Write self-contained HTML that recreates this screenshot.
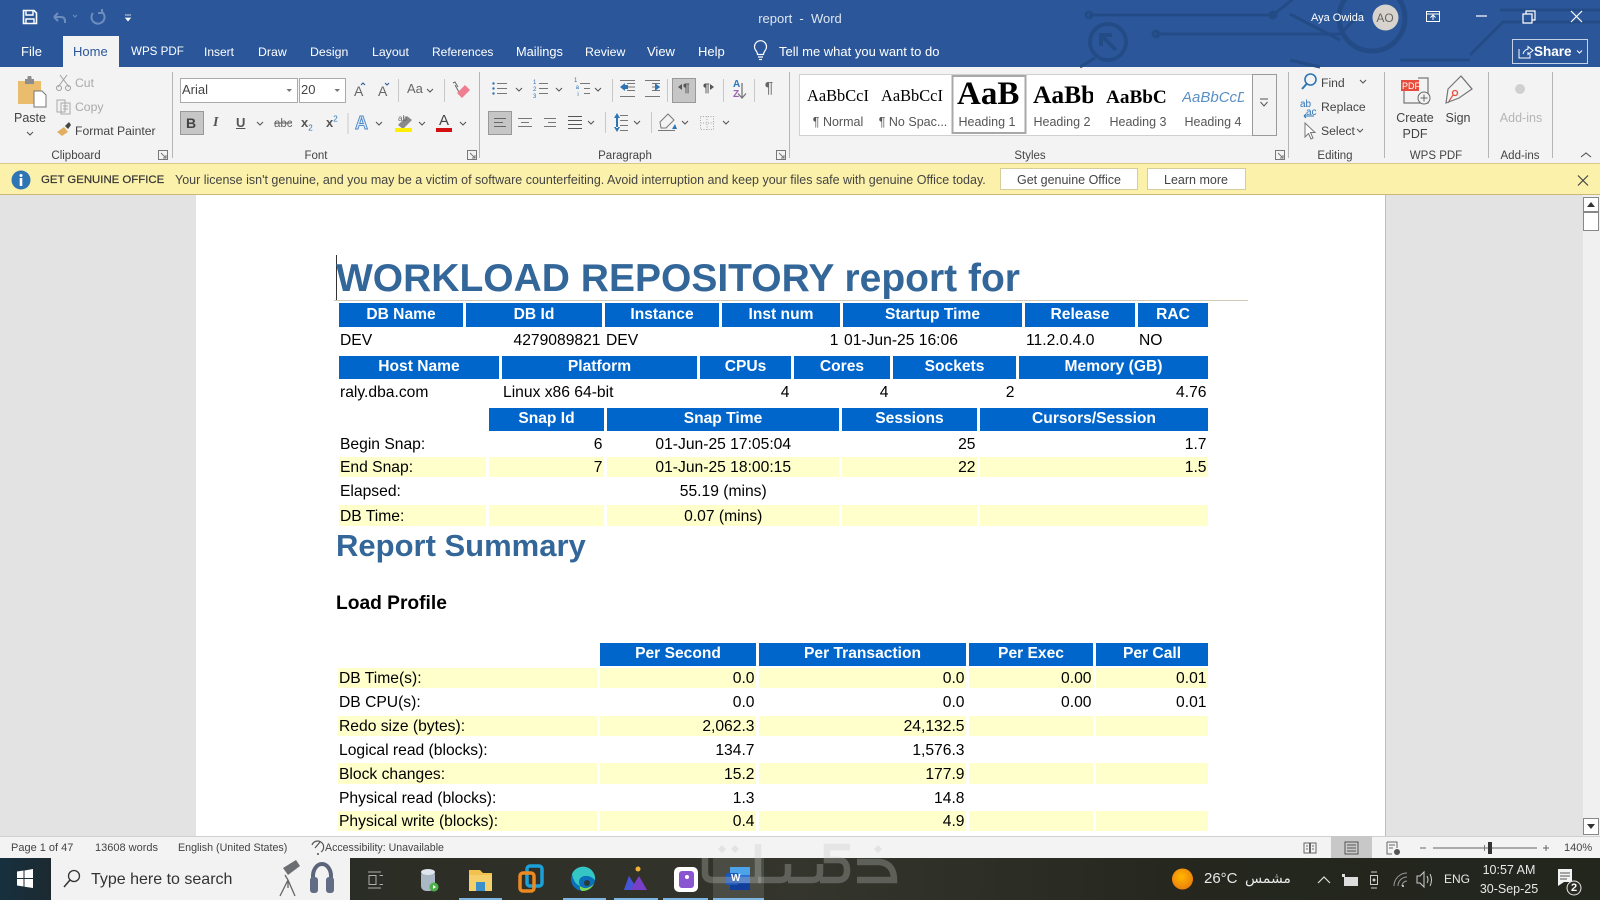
<!DOCTYPE html>
<html lang="en">
<head>
<meta charset="utf-8">
<title>report - Word</title>
<style>
html,body{margin:0;padding:0;width:1600px;height:900px;overflow:hidden;background:#fff;font-family:"Liberation Sans",Arial,sans-serif}
#app{position:relative;width:1600px;height:900px;overflow:hidden}
.b{position:absolute}
.t{position:absolute;white-space:nowrap;line-height:16px;font-size:12.2px;color:#444}
.m{transform:translateX(-50%)}
.w{color:#fff}
.g{color:#a9a9a9}
.gl{font-size:11.5px;color:#444}
.tab{font-size:12.3px;color:#fff;top:44px}
.sty{font-size:12.5px;color:#555;top:114px}
.st{font-size:10.7px;color:#444;top:840px}
table{position:absolute;table-layout:fixed;border-collapse:separate;border-spacing:3px 2px;font-size:15.65px;color:#000;line-height:16px}
td{padding:2px 1.5px 0 2px;overflow:hidden;white-space:nowrap}
th{padding:0 2px 2px;overflow:hidden;white-space:nowrap;background:#0066cc;color:#fff;font-size:15.6px;font-weight:bold;text-align:center}
.t1 th{padding-bottom:0}
td{text-align:right}
td.l{text-align:left;padding-left:1px}
td.c{text-align:center}
tr.y td{background:#ffffcc}
</style>
</head>
<body>
<div id="app">
<!-- title bar and tabs -->
<div class="b" style="left:0;top:0;width:1600px;height:67px;background:#2b579a"></div>
<!-- ribbon -->
<div class="b" style="left:0;top:67px;width:1600px;height:96px;background:#f3f3f3"></div>
<div class="b" style="left:63px;top:36px;width:56px;height:32px;background:#f3f3f3"></div>
<!-- notification -->
<div class="b" style="left:0;top:163px;width:1600px;height:30px;background:#fbf1ab;border-top:1px solid #d9c98a;border-bottom:1px solid #c9b877"></div>
<!-- doc area -->
<div class="b" style="left:0;top:195px;width:1583px;height:641px;background:#e3e3e3"></div>
<div class="b" style="left:196px;top:195px;width:1189px;height:641px;background:#fff;border-right:1px solid #bdbdbd"></div>
<div class="b" style="left:1583px;top:195px;width:17px;height:641px;background:#f0f0f0"></div>
<!-- status bar -->
<div class="b" style="left:0;top:836px;width:1600px;height:22px;background:#f3f3f3;border-top:1px solid #d0d0d0;box-sizing:border-box"></div>
<div class="b" style="left:1331px;top:836px;width:41px;height:22px;background:#c8c8c8"></div>
<!-- taskbar -->
<div class="b" style="left:0;top:858px;width:1600px;height:42px;background:linear-gradient(90deg,#17303f 0,#1c2a30 50px,#2c2d25 400px,#34352c 800px,#25271f 1200px,#22261d 1600px)"></div>
<div class="b" style="left:51px;top:858px;width:299px;height:42px;background:#f2f2f2"></div>
<div class="b" style="left:713px;top:858px;width:51px;height:42px;background:#4b4d44"></div>

<svg class="b" style="left:0;top:0" width="1600" height="900" viewBox="0 0 1600 900" fill="none">
<!-- circuit pattern -->
<g stroke="#234b86" stroke-width="3">
<path d="M1089 15H1273L1298 -5M1156 34H1340L1362 12"/>
<circle cx="1089" cy="15" r="3"/><circle cx="1273" cy="15" r="3"/><circle cx="1156" cy="34" r="3"/>
<circle cx="1108" cy="42" r="18" stroke-width="4"/>
<path d="M1101 46V35H1112M1101 35L1116 50" stroke-width="4"/>
<circle cx="1372" cy="18" r="33" stroke-width="5"/>
<path d="M1470 55L1503 22H1600M1080 67L1095 58M1290 60L1320 67M1400 60H1470M1500 10H1600M1290 14L1340 40"/>
</g>
<!-- QAT -->
<path d="M23.5 10.5H34L36.5 13V23.5H23.5Z" stroke="#fff" stroke-width="1.6"/>
<path d="M26 11V15H33V11M26 23.5V19H34V23.5" stroke="#fff" stroke-width="1.4"/>
<path d="M54 17H61Q65 17 65 21V23M54 17L58 13M54 17L58 21" stroke="#6d8ebd" stroke-width="2"/>
<path d="M73 15l2 2 2-2" stroke="#6d8ebd"/>
<path d="M93 13A6.5 6.5 0 1 0 102 12M102 9V13H98" stroke="#6d8ebd" stroke-width="2"/>
<path d="M125 15H131M125.5 18H130.5L128 21Z" stroke="#fff" fill="#fff" stroke-width=".7"/>
<!-- titlebar controls -->
<path d="M1426.5 11.5H1439.5V21.5H1426.5ZM1426.5 14H1439.5M1433 20V15.5M1430.5 17.5L1433 15L1435.5 17.5" stroke="#fff"/>
<path d="M1476 16H1487" stroke="#fff" stroke-width="1.2"/>
<path d="M1523 14H1532V23H1523ZM1526 14V11H1535V20H1532" stroke="#fff" stroke-width="1.2"/>
<path d="M1571 11L1582 22M1582 11L1571 22" stroke="#fff" stroke-width="1.2"/>
<circle cx="1385.5" cy="17.5" r="13" fill="#d8d3cd"/>
<rect x="1512.5" y="39.5" width="75" height="24" stroke="#c6d3e6"/>
<path d="M1519 49V58H1530V54M1523 54Q1524 50 1528 49V46.500L1533 50.500L1528 54.500V52" stroke="#fff"/>
<path d="M1577 50.500l2.500 2.500 2.500-2.500" stroke="#fff"/>
<path d="M755.500 50a6 6 0 1 1 10 0c-1.200 1.600-2 2.500-2 4.500h-6c0-2-.8-3-2-4.500ZM758 57h5M759 59.500h3" stroke="#fff" stroke-width="1.200"/>
<!-- Clipboard -->
<path d="M18 81H41V104H18Z" fill="#e9bd6d"/>
<path d="M25 79H34V84H25Z" fill="#8d8d8d"/><rect x="27.500" y="76" width="4" height="4" rx="1" fill="#8d8d8d"/>
<path d="M34 91H42L46 95V107H34Z" fill="#fff" stroke="#777"/>
<path d="M60 75L69 87M67 75L58 87" stroke="#9d9d9d"/><circle cx="59" cy="88" r="2.500" stroke="#9d9d9d"/><circle cx="68" cy="88" r="2.500" stroke="#9d9d9d"/>
<path d="M57 100H65V112H57ZM61 103H70V114H61ZM63 106H68M63 109H68" stroke="#aaa"/>
<path d="M57 132L64 127L68 132L62 136Z" fill="#e0b060"/><path d="M65 126L69 122L71 125L68 129Z" fill="#444"/>
<!-- font boxes -->
<rect x="180.500" y="78.500" width="117" height="24" fill="#fff" stroke="#aaa"/>
<rect x="299.500" y="78.500" width="46" height="24" fill="#fff" stroke="#aaa"/>
<path d="M286.500 89H292L289.250 92ZM334.500 89H340L337.250 92Z" fill="#777"/>
<text x="354" y="96" font-family="Liberation Sans" font-size="14" fill="#666">A</text>
<text x="378" y="96" font-family="Liberation Sans" font-size="14" fill="#666">A</text>
<path d="M361 85l2-2 2 2M385 83l2 2 2-2" stroke="#2b579a"/>
<path d="M398.500 79V102M444.500 79V102M348 113V134M612.500 79V102M667.500 79V102M723.500 79V102M754.500 79V102M605.500 112V133M651.500 112V133" stroke="#c8c8c8"/>
<path d="M172.500 72V158M479.500 72V158M789.500 72V158M1288.500 72V158M1384.500 72V158M1488.500 72V158M1552.500 72V158" stroke="#b5b5b5"/>
<path d="M455 85L460 94M453 83l2-1 3 5" stroke="#666"/>
<path d="M457 93L465 85L470 90L462 98Z" fill="#ef7f90"/>
<rect x="180.500" y="111.500" width="23" height="23" fill="#c6c6c6" stroke="#999"/>
<rect x="488.500" y="111.500" width="23" height="23" fill="#c6c6c6" stroke="#999"/>
<rect x="672.500" y="78.500" width="23" height="24" fill="#c6c6c6" stroke="#999"/>
<path d="M274 123H292" stroke="#555"/>
<text x="355" y="129" font-family="Liberation Sans" font-size="18" font-weight="bold" fill="#dbe9f7" stroke="#4a86c8" stroke-width=".9">A</text>
<path d="M398 125L407 116L412 120L403 129Z" fill="#8a8a8a"/><rect x="395" y="128" width="17" height="4" fill="#ffef00"/>
<rect x="436" y="128" width="16" height="4" fill="#d40f14"/>
<!-- paragraph icons -->
<g stroke="#777">
<path d="M497 83.500H507M497 88.500H507M497 93.500H507"/>
<path d="M539 83.500H548M539 88.500H548M539 93.500H548"/>
<path d="M580 83.500H590M584 88.500H590M584 93.500H590"/>
<path d="M627 83.500H635M627 87H635M627 90.500H635M620 96.500H635M620 80.500H635"/>
<path d="M652 83.500H660M652 87H660M652 90.500H660M645 96.500H660M645 80.500H660"/>
<path d="M494 118.500H506M494 122.500H503M494 126.500H506" stroke="#666"/>
<path d="M518 118.500H532M521 122.500H529M518 126.500H532"/>
<path d="M544 118.500H556M548 122.500H556M544 126.500H556"/>
<path d="M568 116.500H582M568 120.500H582M568 124.500H582M568 128.500H582" stroke="#555"/>
<path d="M620 115.500H628M620 120.500H628M620 125.500H628M620 130.500H628"/>
<path d="M658 130.500H675"/>
<path d="M700.500 116.500H713.500V129.500H700.500Z M707 116.500V129.500M700.500 123H713.500" stroke="#aaa" stroke-dasharray="1 1.500"/>
<path d="M742 83V97M738 93.500L742 98L746 93.500" stroke="#777" stroke-width="1.300"/>
<path d="M660 122L668 114L674 120L666 128H661Z"/>
</g>
<g fill="#2e75b6">
<circle cx="493.500" cy="83.500" r="1.200"/><circle cx="493.500" cy="88.500" r="1.200"/><circle cx="493.500" cy="93.500" r="1.200"/>
<path d="M620 87L625 83V91ZM660 87L655 83V91ZM647 85H652M647 89H652"/>
<path d="M625 85H628V89H625ZM614 118L617 113L620 118ZM614 127L617 132L620 127ZM616 117H618V128H616Z"/>
<path d="M672 129L675 124L677 129Z"/>
<path d="M678 87L682 84V90ZM714 87L710 84V90Z" fill="#555"/>
</g>
<!-- styles -->
<rect x="799.500" y="74.500" width="477" height="61" fill="#fff" stroke="#d0d0d0"/>
<rect x="952.500" y="76" width="73" height="57" fill="#fff" stroke="#a8a8a8" stroke-width="2"/>
<rect x="1252.500" y="74.500" width="24" height="61" fill="#f3f3f3" stroke="#9a9a9a"/>
<path d="M1260 99H1268M1260.500 102L1264 106L1267.500 102" stroke="#555"/>
<!-- editing -->
<circle cx="1310.500" cy="79.500" r="5.500" stroke="#2e75b6" stroke-width="1.600"/><path d="M1306.500 84L1302 89" stroke="#2e75b6" stroke-width="2"/>
<path d="M1304 116H1314M1304 116L1306 114M1304 116L1306 118" stroke="#2e75b6"/>
<path d="M1305 123V137L1308.500 133.500L1311 139L1313 138L1310.500 132.500H1315Z" fill="#fff" stroke="#777"/>
<!-- pdf/sign -->
<path d="M1405 83V102H1429V77H1419" stroke="#777" stroke-width="1.200" transform="translate(-1 1)"/>
<rect x="1401" y="80" width="18" height="11" fill="#e84c3d"/>
<circle cx="1424" cy="98" r="6" fill="#f3f3f3" stroke="#666"/><path d="M1424 94.500V101.500M1420.500 98H1427.500" stroke="#666"/>
<path d="M1446 103L1448 89L1461 76L1472 89L1459 98Z" stroke="#777" stroke-width="1.200"/>
<path d="M1461 76L1472 89M1448 103L1453 95" stroke="#777"/><circle cx="1455" cy="93" r="2.500" stroke="#e74c3c" stroke-width="1.300"/><path d="M1449 101L1453 95" stroke="#e74c3c"/>
<circle cx="1520" cy="89" r="5" fill="#d0d0d0"/>
<!-- launchers, chevrons -->
<path d="M158.500 150.500H167.500V159.500H158.500ZM467.500 150.500H476.500V159.500H467.500ZM776.500 150.500H785.500V159.500H776.500ZM1275.500 150.500H1284.500V159.500H1275.500ZM161 153L166 158M166 155V158H163M470 153L475 158M475 155V158H472M779 153L784 158M784 155V158H781M1278 153L1283 158M1283 155V158H1280" stroke="#777"/>
<path d="M27 132l3 3 3-3M427 89l3 3 3-3M516 88l3 3 3-3M556 88l3 3 3-3M595 88l3 3 3-3M257 122l3 3 3-3M376 122l3 3 3-3M419 122l3 3 3-3M460 122l3 3 3-3M588 121l3 3 3-3M634 121l3 3 3-3M682 121l3 3 3-3M723 121l3 3 3-3M1360 80l3 3 3-3M1357 129l3 3 3-3" stroke="#555" stroke-width="1.100"/>
<path d="M1581 157l5-4 5 4" stroke="#555" stroke-width="1.100"/>
<!-- notification -->
<circle cx="21" cy="180" r="9.500" fill="#2e75b6"/>
<circle cx="21" cy="175.500" r="1.500" fill="#fff"/><rect x="19.700" y="178" width="2.600" height="8" fill="#fff"/>
<rect x="1000.500" y="168.500" width="137" height="21" fill="#fff" stroke="#d6cd9d"/>
<rect x="1147.500" y="168.500" width="98" height="21" fill="#fff" stroke="#d6cd9d"/>
<path d="M1578 175.500L1588 185.500M1588 175.500L1578 185.500" stroke="#444" stroke-width="1.200"/>
<!-- scrollbar -->
<rect x="1583.500" y="197.500" width="15" height="14" fill="#fff" stroke="#888"/>
<path d="M1587 207L1591 202L1595 207Z" fill="#333"/>
<rect x="1583.500" y="212.500" width="15" height="18" fill="#fff" stroke="#888"/>
<rect x="1583.500" y="818.500" width="15" height="16" fill="#fff" stroke="#888"/>
<path d="M1587 824L1591 829L1595 824Z" fill="#333"/>
<!-- cursor and heading rule -->
<path d="M336.500 255V300" stroke="#333"/>
<path d="M334 300.500H1248" stroke="#cfc9b8"/>
<!-- status icons -->
<path d="M312 845A6 6 0 1 1 321 852M320 842L315 848" stroke="#555" stroke-width="1.200"/><circle cx="318" cy="854" r="1" fill="#555"/>
<path d="M1304 843H1309.500V853H1304ZM1310.500 843H1316V853H1310.500ZM1306 846H1308M1306 849H1308M1312 846H1314M1312 849H1314" stroke="#666"/>
<path d="M1345 842H1358V854H1345ZM1347 845H1356M1347 848H1356M1347 851H1356" stroke="#555"/>
<path d="M1387 842H1397V848M1387 842V854H1392M1389 845H1395M1389 848H1393" stroke="#666"/><circle cx="1397" cy="852" r="3" fill="#555"/>
<path d="M1420 848H1426M1433 848H1537" stroke="#666"/><path d="M1543 848H1549M1546 845V851" stroke="#666"/>
<rect x="1488" y="842" width="4" height="12" fill="#333"/><path d="M1484.500 845V851" stroke="#777"/>
<!-- taskbar icons -->
<path d="M17 871.500L23.500 870.500V878H17ZM24.500 870.500L33 869V878H24.500ZM17 879H23.500V886.500L17 885.500ZM24.500 879H33V888L24.500 886.700Z" fill="#fff"/>
<circle cx="74" cy="876" r="5.500" stroke="#333" stroke-width="1.300"/><path d="M70 880L64 887" stroke="#333" stroke-width="1.500"/>
<!-- mic -->
<path d="M283 868L296 860L300 866L288 875Z" fill="#6d6e72"/><path d="M285 875L288 880V888M288 880L280 896M288 880L295 896" stroke="#666" stroke-width="1.300"/>
<!-- headphones -->
<path d="M313 884V876A9 12 0 0 1 331 876V884" stroke="#5b6478" stroke-width="4"/>
<rect x="310" y="877" width="8" height="16" rx="3" fill="#626c84"/><rect x="326" y="877" width="8" height="16" rx="3" fill="#626c84"/>
<!-- task view -->
<path d="M368 872H381M368 888H381M369 875.500H376V884.500H369ZM379.500 875.500H383M379.500 884.500H383" stroke="#cfcfcf" stroke-opacity=".8"/>
<!-- db -->
<rect x="421" y="870" width="14" height="21" rx="5" fill="#aab8c6"/><ellipse cx="428" cy="872" rx="7" ry="3" fill="#dfe6ee"/>
<circle cx="434" cy="887" r="4.500" fill="#4db14a"/><path d="M433 885L436 887L433 889Z" fill="#fff"/>
<!-- explorer -->
<path d="M469 870H480L483 873H492V891H469Z" fill="#f2c14e"/><rect x="469" y="875" width="23" height="16" fill="#f5cf6a"/><rect x="476" y="882" width="9" height="9" fill="#3c90c9"/>
<!-- vm -->
<rect x="527" y="866" width="15" height="20" rx="3" stroke="#1ba0d8" stroke-width="3.500"/>
<rect x="520" y="873" width="14" height="18" rx="3" stroke="#ec8a22" stroke-width="3.500"/>
<!-- edge -->
<circle cx="583" cy="879" r="12" fill="#0b6fba"/>
<path d="M572 874A12 12 0 0 1 595 880Q590 875 584 876Q577 878 580 886Q574 884 572 874Z" fill="#34c6c4"/>
<path d="M580 886Q586 891 594 884Q590 891 582 891Q579 889 580 886Z" fill="#7ed957"/>
<circle cx="587" cy="883" r="3" fill="#2c3a3a"/>
<!-- mountains -->
<path d="M624 890L629 876L634 884L639 876L647 890Z" fill="#7a3fc8"/><path d="M629 876L634 884L631 890H624Z" fill="#4455d8"/><circle cx="638" cy="869" r="2.500" fill="#f3b22f"/>
<!-- purple app -->
<rect x="674" y="867" width="24" height="25" rx="5" fill="#fff"/><rect x="679" y="871" width="15" height="17" rx="3" fill="#8a55d0"/><circle cx="687" cy="877" r="2" fill="#fff"/>
<!-- word -->
<rect x="730" y="867" width="20" height="23" rx="1" fill="#2b6fd3"/><rect x="730" y="867" width="20" height="8" fill="#4da3ea"/><rect x="730" y="883" width="20" height="7" fill="#123f9c"/>
<rect x="726" y="873" width="12" height="12" rx="1" fill="#1c56b8"/>
<!-- indicators -->
<g fill="#7db6e2"><rect x="459" y="898" width="43" height="2"/><rect x="563" y="898" width="43" height="2"/><rect x="614" y="898" width="44" height="2"/><rect x="663" y="898" width="45" height="2"/><rect x="713" y="898" width="51" height="2"/></g>
<!-- watermark -->
<g stroke="#c5c5c5" stroke-opacity=".31" stroke-width="6.500" fill="none">
<path d="M705 858V873Q705 880 713 880H758V844"/>
<path d="M758 880H780Q788 880 788 872V864M788 880H812Q820 880 820 872V864M820 880H838Q847 880 847 870Q847 860 838 860H827V847H850"/>
<path d="M857 862H880Q894 864 894 880H857"/>
</g>
<path d="M718 849l4-4 4 4-4 4ZM731 849l4-4 4 4-4 4ZM874 849l4-4 4 4-4 4Z" fill="#c5c5c5" fill-opacity=".35"/>
<!-- tray -->
<defs><radialGradient id="sun" cx=".45" cy=".4" r=".7"><stop offset="0" stop-color="#ffb800"/><stop offset="1" stop-color="#e9760e"/></radialGradient></defs>
<circle cx="1182.500" cy="879" r="10.500" fill="url(#sun)"/>
<path d="M1318 883L1324 877L1330 883" stroke="#ddd" stroke-width="1.200"/>
<rect x="1344" y="877" width="14" height="9" fill="#ddd"/><rect x="1342" y="874" width="3" height="3" fill="#ddd"/>
<path d="M1370.500 875.500H1377.500V884.500H1370.500ZM1371 872H1377M1371 888H1377" stroke="#ccc"/><circle cx="1374" cy="880" r="1.500" fill="#ccc"/>
<path d="M1394 886A13 13 0 0 1 1407 873M1398 886A9 9 0 0 1 1407 877M1402 886A5 5 0 0 1 1407 881" stroke="#999"/><circle cx="1403" cy="886" r="1" fill="#ddd"/>
<path d="M1417 876H1420L1424 872V887L1420 883H1417ZM1427 876Q1429 880 1427 883M1430 874Q1433 880 1430 886" stroke="#ccc"/>
<path d="M1558 869H1572V882H1564L1558 886Z" fill="#f3f3f3"/><path d="M1560 873H1570M1560 876H1570M1560 879H1567" stroke="#555"/>
<circle cx="1574" cy="888" r="7" fill="#2b2c24" stroke="#e8e8e8"/>
</svg>

<!-- Title bar text -->
<div class="t w m" style="left:800px;top:11px;font-size:13px;color:#dfe6f0">report &nbsp;-&nbsp; Word</div>
<div class="t w" style="left:1311px;top:10px;font-size:11px">Aya Owida</div>
<div class="t m" style="left:1385px;top:10px;font-size:12px;color:#666">AO</div>
<div class="t w" style="left:1534px;top:44px;font-size:13.500px;font-weight:bold">Share</div>

<!-- Tabs -->
<div class="t tab" style="left:21px;font-size:13px">File</div>
<div class="t tab" style="left:73px;color:#2b579a;font-size:13px">Home</div>
<div class="t tab" style="left:131px;font-size:11.600px">WPS PDF</div>
<div class="t tab" style="left:204px;font-size:12px">Insert</div>
<div class="t tab" style="left:258px">Draw</div>
<div class="t tab" style="left:310px">Design</div>
<div class="t tab" style="left:372px">Layout</div>
<div class="t tab" style="left:432px;font-size:12px">References</div>
<div class="t tab" style="left:516px;font-size:12.800px">Mailings</div>
<div class="t tab" style="left:585px">Review</div>
<div class="t tab" style="left:647px;font-size:13px">View</div>
<div class="t tab" style="left:698px;font-size:13px">Help</div>
<div class="t tab" style="left:779px;font-size:13px">Tell me what you want to do</div>

<!-- Ribbon text -->
<div class="t m" style="left:30px;top:110px;font-size:12.500px">Paste</div>
<div class="t g" style="left:75px;top:75px">Cut</div>
<div class="t g" style="left:75px;top:99px">Copy</div>
<div class="t" style="left:75px;top:123px">Format Painter</div>
<div class="t gl m" style="left:76px;top:147.500px">Clipboard</div>
<div class="t" style="left:182px;top:82px;font-size:13px">Arial</div>
<div class="t" style="left:301px;top:82px;font-size:13px">20</div>
<div class="t" style="left:407px;top:81px;font-size:13px;color:#666">Aa</div>
<div class="t" style="left:186px;top:115px;font-size:14px;font-weight:bold;color:#444">B</div>
<div class="t" style="left:213px;top:115px;font-size:14px;font-weight:bold;font-style:italic;color:#555;font-family:'Liberation Serif',serif">I</div>
<div class="t" style="left:236px;top:115px;font-size:13px;font-weight:bold;text-decoration:underline;color:#555">U</div>
<div class="t" style="left:274px;top:116px;font-size:11.500px;color:#666">abc</div>
<div class="t" style="left:301px;top:115px;font-size:13px;font-weight:bold;color:#555">x<sub style="font-size:8px;color:#2e75b6;font-weight:normal;line-height:0">2</sub></div>
<div class="t" style="left:326px;top:115px;font-size:13px;font-weight:bold;color:#555">x<sup style="font-size:8px;color:#2e75b6;font-weight:normal;line-height:0">2</sup></div>
<div class="t" style="left:439px;top:113px;font-size:15px;color:#444">A</div>
<div class="t" style="left:398px;top:111px;font-size:8px;color:#666">ab</div>
<div class="t gl m" style="left:316px;top:147.500px">Font</div>
<div class="t" style="left:533px;top:80px;font-size:6px;line-height:7px;color:#2e75b6">1<br>2<br>3</div>
<div class="t" style="left:574px;top:78px;font-size:6px;line-height:7px;color:#2e75b6">1<br>&nbsp;a<br>&nbsp;&nbsp;i</div>
<div class="t" style="left:733px;top:80px;font-size:10px;line-height:10px;font-weight:bold;color:#2e75b6">A<br><span style="color:#9a5fb0">Z</span></div>
<div class="t" style="left:683px;top:80px;font-size:12px;font-weight:bold;color:#555">¶</div>
<div class="t" style="left:703px;top:80px;font-size:12px;font-weight:bold;color:#555">¶</div>
<div class="t m" style="left:769px;top:81px;font-size:16px;color:#666">¶</div>
<div class="t gl m" style="left:625px;top:147.500px">Paragraph</div>

<!-- Styles gallery -->
<div class="t" style="left:807px;top:88px;font:16.400px/16px 'Liberation Serif',serif;color:#000">AaBbCcI</div>
<div class="t" style="left:881px;top:88px;font:16.400px/16px 'Liberation Serif',serif;color:#000">AaBbCcI</div>
<div class="t" style="left:957px;top:75px;font:bold 33px/38px 'Liberation Serif',serif;color:#000">AaB</div>
<div class="b" style="left:1033px;top:80px;width:60px;height:32px;overflow:hidden"><div class="t" style="left:0;top:1px;font:bold 25.500px/28px 'Liberation Serif',serif;color:#000">AaBb</div></div>
<div class="t" style="left:1106px;top:88px;font:bold 19.200px/20px 'Liberation Serif',serif;color:#000">AaBbC</div>
<div class="b" style="left:1182px;top:85px;width:62px;height:24px;overflow:hidden"><div class="t" style="left:0;top:3px;font:italic 15px/20px 'Liberation Sans',sans-serif;color:#5a8fc4">AaBbCcD</div></div>
<div class="t sty m" style="left:838px">¶ Normal</div>
<div class="t sty m" style="left:913px">¶ No Spac...</div>
<div class="t sty m" style="left:987px">Heading 1</div>
<div class="t sty m" style="left:1062px">Heading 2</div>
<div class="t sty m" style="left:1138px">Heading 3</div>
<div class="t sty m" style="left:1213px">Heading 4</div>
<div class="t gl m" style="left:1030px;top:147.500px">Styles</div>

<!-- Editing etc -->
<div class="t" style="left:1321px;top:75px">Find</div>
<div class="t" style="left:1321px;top:99px">Replace</div>
<div class="t" style="left:1321px;top:123px">Select</div>
<div class="t" style="left:1300px;top:100px;font-size:10px;line-height:9px;color:#2e75b6">ab</div>
<div class="t" style="left:1306px;top:108px;font-size:10px;line-height:9px;color:#2e75b6">ac</div>
<div class="t gl m" style="left:1335px;top:147.500px">Editing</div>
<div class="t" style="left:1402px;top:81px;font-size:9px;color:#fff;line-height:10px">PDF</div>
<div class="t m" style="left:1415px;top:110px;font-size:12.500px">Create</div>
<div class="t m" style="left:1415px;top:126px;font-size:12.500px">PDF</div>
<div class="t m" style="left:1458px;top:110px;font-size:12.500px">Sign</div>
<div class="t gl m" style="left:1436px;top:147.500px">WPS PDF</div>
<div class="t g m" style="left:1521px;top:110px;font-size:12.500px;color:#b5b5b5">Add-ins</div>
<div class="t gl m" style="left:1520px;top:147.500px">Add-ins</div>

<!-- Notification -->
<div class="t" style="left:41px;top:172px;font-size:11.400px;color:#333;-webkit-text-stroke:.2px #333">GET GENUINE OFFICE</div>
<div class="t" style="left:175px;top:172px;font-size:12.500px;color:#444">Your license isn't genuine, and you may be a victim of software counterfeiting. Avoid interruption and keep your files safe with genuine Office today.</div>
<div class="t m" style="left:1069px;top:172px;font-size:12.500px;color:#444">Get genuine Office</div>
<div class="t m" style="left:1196px;top:172px;font-size:12.500px;color:#444">Learn more</div>

<!-- Document -->
<div class="t" style="left:336px;top:256px;font-size:39px;font-weight:bold;line-height:46px;color:#336699">WORKLOAD REPOSITORY report for</div>

<table class="t1" style="left:336px;top:301px;width:869px">
<colgroup><col style="width:124px"><col style="width:136px"><col style="width:114px"><col style="width:118px"><col style="width:179px"><col style="width:110px"><col style="width:70px"></colgroup>
<tr style="height:24px"><th>DB Name</th><th>DB Id</th><th>Instance</th><th>Inst num</th><th>Startup Time</th><th>Release</th><th>RAC</th></tr>
<tr style="height:21px"><td class="l">DEV</td><td>4279089821</td><td class="l">DEV</td><td>1</td><td class="l">01-Jun-25 16:06</td><td class="l">11.2.0.4.0</td><td class="l">NO</td></tr>
</table>

<table style="left:336px;top:354px;width:869px">
<colgroup><col style="width:160px"><col style="width:195px"><col style="width:91px"><col style="width:96px"><col style="width:123px"><col style="width:189px"></colgroup>
<tr style="height:23px"><th>Host Name</th><th>Platform</th><th>CPUs</th><th>Cores</th><th>Sockets</th><th>Memory (GB)</th></tr>
<tr style="height:22px"><td class="l">raly.dba.com</td><td class="l">Linux x86 64-bit</td><td>4</td><td>4</td><td>2</td><td>4.76</td></tr>
</table>

<table style="left:336px;top:406px;width:869px">
<colgroup><col style="width:147px"><col style="width:115px"><col style="width:232px"><col style="width:135px"><col style="width:228px"></colgroup>
<tr style="height:23px"><td></td><th>Snap Id</th><th>Snap Time</th><th>Sessions</th><th>Cursors/Session</th></tr>
<tr style="height:22px"><td class="l">Begin Snap:</td><td>6</td><td class="c">01-Jun-25 17:05:04</td><td>25</td><td>1.7</td></tr>
<tr class="y" style="height:20px"><td class="l">End Snap:</td><td>7</td><td class="c">01-Jun-25 18:00:15</td><td>22</td><td>1.5</td></tr>
<tr style="height:24px"><td class="l">Elapsed:</td><td></td><td class="c">55.19 (mins)</td><td></td><td></td></tr>
<tr class="y" style="height:21px"><td class="l">DB Time:</td><td></td><td class="c">0.07 (mins)</td><td></td><td></td></tr>
</table>

<div class="t" style="left:336px;top:527px;font-size:31px;font-weight:bold;line-height:38px;color:#336699">Report Summary</div>
<div class="t" style="left:336px;top:592px;font-size:19.200px;font-weight:bold;line-height:24px;color:#000">Load Profile</div>

<table style="left:335px;top:641px;width:870px">
<colgroup><col style="width:259px"><col style="width:156px"><col style="width:207px"><col style="width:124px"><col style="width:112px"></colgroup>
<tr style="height:23px"><td></td><th>Per Second</th><th>Per Transaction</th><th>Per Exec</th><th>Per Call</th></tr>
<tr class="y" style="height:20px"><td class="l">DB Time(s):</td><td>0.0</td><td>0.0</td><td>0.00</td><td>0.01</td></tr>
<tr style="height:24px"><td class="l">DB CPU(s):</td><td>0.0</td><td>0.0</td><td>0.00</td><td>0.01</td></tr>
<tr class="y" style="height:20px"><td class="l">Redo size (bytes):</td><td>2,062.3</td><td>24,132.5</td><td></td><td></td></tr>
<tr style="height:23px"><td class="l">Logical read (blocks):</td><td>134.7</td><td>1,576.3</td><td></td><td></td></tr>
<tr class="y" style="height:21px"><td class="l">Block changes:</td><td>15.2</td><td>177.9</td><td></td><td></td></tr>
<tr style="height:23px"><td class="l">Physical read (blocks):</td><td>1.3</td><td>14.8</td><td></td><td></td></tr>
<tr class="y" style="height:20px"><td class="l">Physical write (blocks):</td><td>0.4</td><td>4.9</td><td></td><td></td></tr>
</table>

<!-- Status bar -->
<div class="t st" style="left:11px;font-size:11px">Page 1 of 47</div>
<div class="t st" style="left:95px;font-size:11px">13608 words</div>
<div class="t st" style="left:178px">English (United States)</div>
<div class="t st" style="left:325px;font-size:10.600px">Accessibility: Unavailable</div>
<div class="t st" style="left:1564px;font-size:11px">140%</div>

<!-- Taskbar text -->
<div class="t" style="left:91px;top:872px;font-size:16px;color:#333">Type here to search</div>
<div class="t" style="left:731px;top:873px;font-size:10px;font-weight:bold;color:#fff;line-height:12px">W</div>
<div class="t" style="left:1204px;top:871px;font-size:15px;color:#e8e8e8">26°C</div>
<div class="t" style="left:1245px;top:871px;font-size:14px;color:#e8e8e8;font-family:'DejaVu Sans',sans-serif;direction:rtl">مشمس</div>
<div class="t" style="left:1444px;top:871px;font-size:12px;color:#e8e8e8">ENG</div>
<div class="t m" style="left:1509px;top:862px;font-size:12.500px;color:#e8e8e8">10:57 AM</div>
<div class="t m" style="left:1509px;top:881px;font-size:12.500px;color:#e8e8e8">30-Sep-25</div>
<div class="t m" style="left:1574px;top:880px;font-size:11px;font-weight:bold;color:#fff">2</div>
</div>
</body>
</html>
